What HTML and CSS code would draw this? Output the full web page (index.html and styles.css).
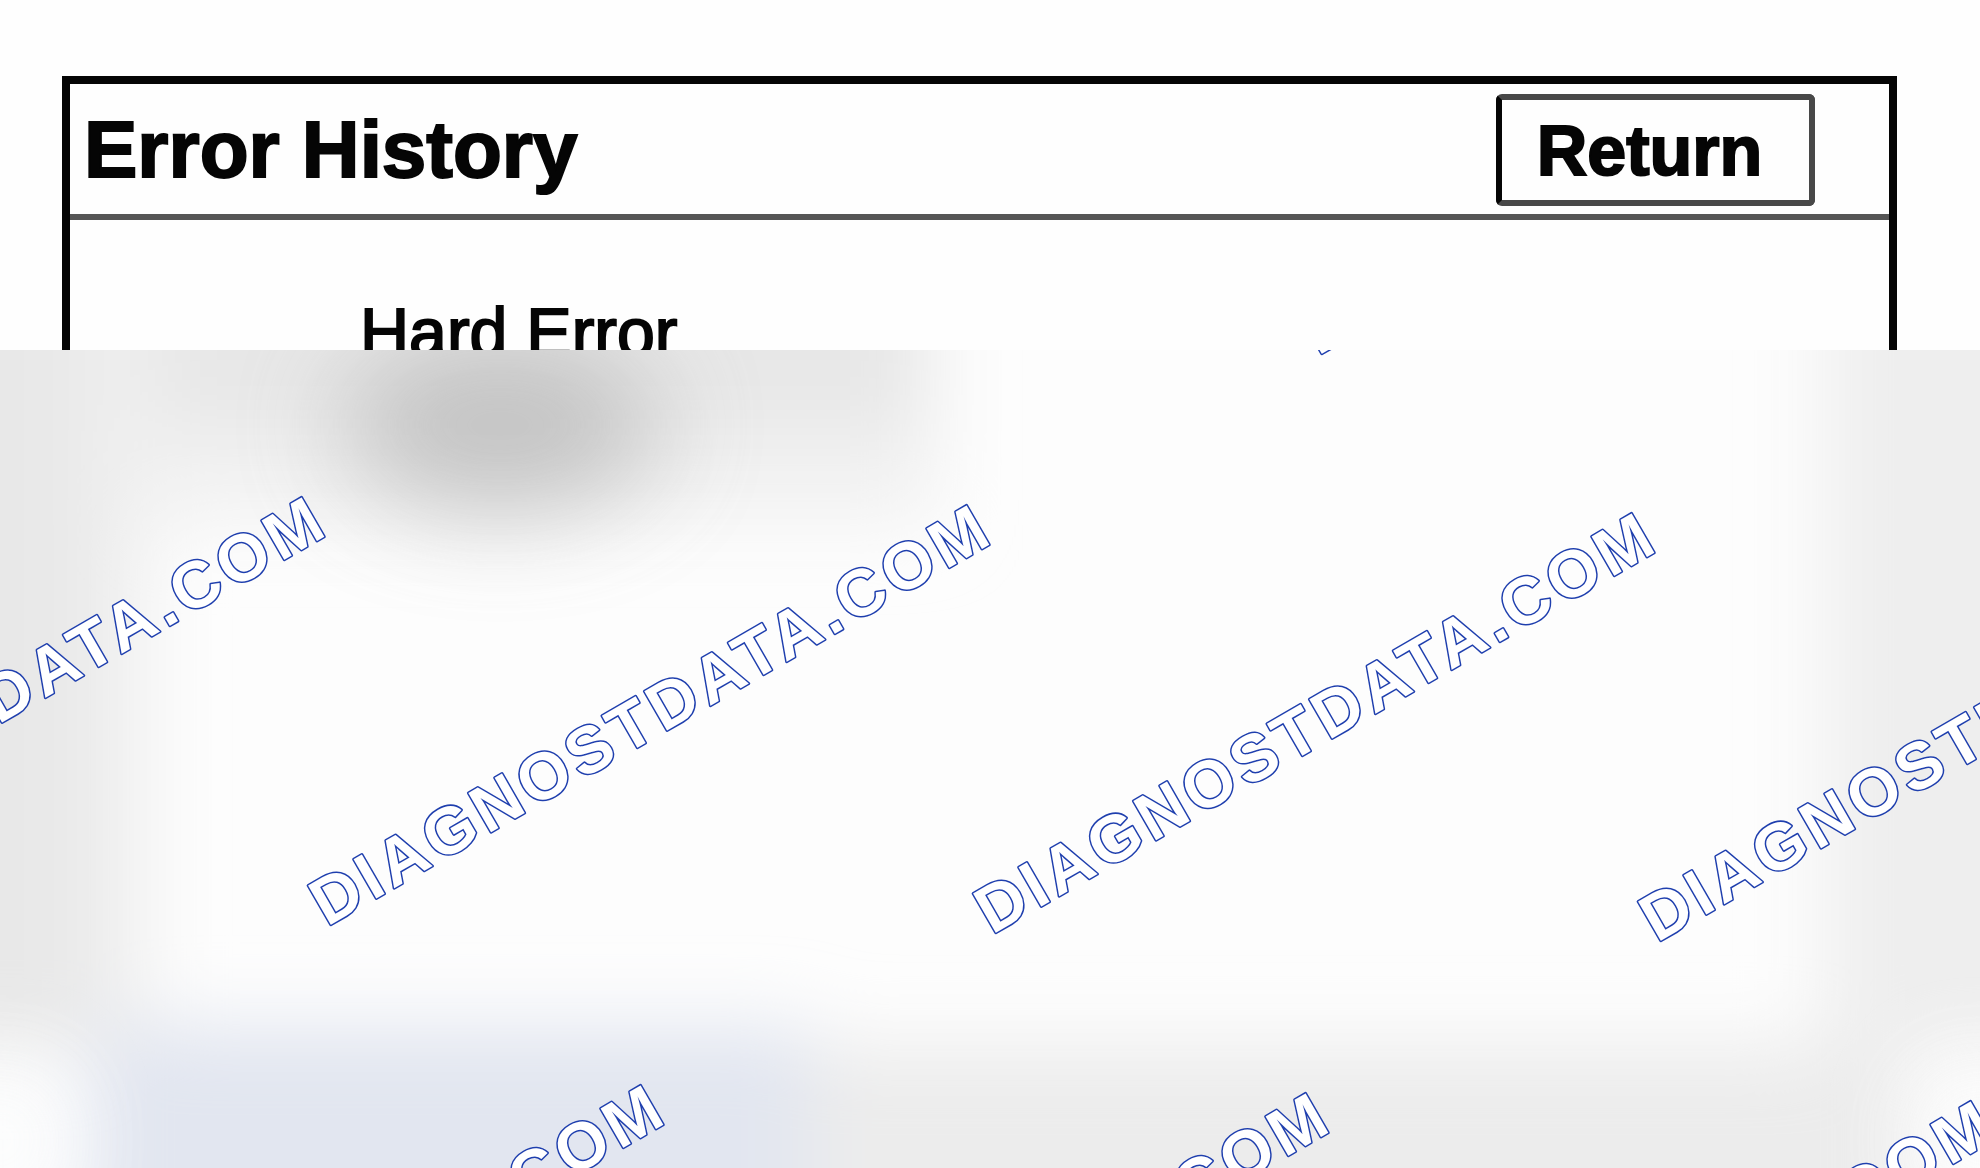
FILE: index.html
```html
<!DOCTYPE html>
<html lang="en">
<head>
    <meta charset="UTF-8">
    <meta name="viewport" content="width=device-width, initial-scale=1.0">
    <title>Error History</title>
    <link rel="stylesheet" href="styles.css">
</head>
<body>
    <main class="screen">
        <header class="screen-header">
            <h1>Error History</h1>
            <button type="button" class="return-button">Return</button>
        </header>
        <section class="screen-body">
            <h2>Hard Error</h2>
        </section>
    </main>

    <div class="preview">
        <svg class="preview-art" viewBox="0 0 1980 818" preserveAspectRatio="xMinYMin slice" role="img" aria-label="Preview">
            <defs>
                <filter id="soft" x="-50%" y="-50%" width="200%" height="200%">
                    <feGaussianBlur stdDeviation="38"/>
                </filter>
                <filter id="softer" x="-100%" y="-150%" width="300%" height="400%">
                    <feGaussianBlur stdDeviation="52"/>
                </filter>
            </defs>

            <!-- blurred backdrop -->
            <rect width="1980" height="818" fill="#fdfdfd"/>
            <g filter="url(#soft)">
                <rect x="-200" y="-200" width="1140" height="375" fill="#f2f2f2"/>
                <rect x="-200" y="-200" width="1120" height="280" fill="#e7e7e7"/>
                <rect x="-200" y="-200" width="350" height="900" fill="#f0f0f0"/>
                <rect x="-200" y="-200" width="290" height="900" fill="#e8e8e8"/>
                <rect x="1815" y="-200" width="365" height="900" fill="#f3f3f3"/>
                <rect x="1845" y="-200" width="335" height="900" fill="#eeeeee"/>
                <rect x="780" y="695" width="1130" height="400" fill="#ececec"/>
                <rect x="85" y="675" width="725" height="400" fill="#e2e6f0"/>
            </g>
            <ellipse cx="500" cy="75" rx="160" ry="85" fill="#bbb" opacity="0.85" filter="url(#softer)"/>
            <ellipse cx="0" cy="790" rx="50" ry="60" fill="#fafcfd" opacity="0.7" filter="url(#softer)"/>
            <ellipse cx="1980" cy="790" rx="50" ry="60" fill="#fafafa" opacity="0.6" filter="url(#softer)"/>

            <!-- watermark -->
            <g class="watermark">
                <text transform="translate(1318 6) rotate(-30)">DIAGNOSTDATA.COM</text>
                <text transform="translate(-338 569) rotate(-30)">DIAGNOSTDATA.COM</text>
                <text transform="translate(327 577) rotate(-30)">DIAGNOSTDATA.COM</text>
                <text transform="translate(992 585) rotate(-30)">DIAGNOSTDATA.COM</text>
                <text transform="translate(1657 593) rotate(-30)">DIAGNOSTDATA.COM</text>
                <text transform="translate(1 1157) rotate(-30)">DIAGNOSTDATA.COM</text>
                <text transform="translate(666 1165) rotate(-30)">DIAGNOSTDATA.COM</text>
                <text transform="translate(1331 1173) rotate(-30)">DIAGNOSTDATA.COM</text>
            </g>
        </svg>
    </div>
</body>
</html>
```

FILE: styles.css
```css
* {
    margin: 0;
    padding: 0;
    box-sizing: border-box;
}

body {
    display: flex;
    flex-direction: column;
    min-height: 100vh;
    font-family: "Liberation Sans", Arial, sans-serif;
    background: #fefefe;
    color: #050505;
}

.screen {
    margin: 76px 83px 0 62px;
    border: 8px solid #050505;
    border-bottom: none;
}

.screen-header {
    display: flex;
    align-items: center;
    justify-content: space-between;
    height: 136px;
    padding: 2px 74px 0 14px;
    border-bottom: 6px solid #555;
}

h1 {
    font-size: 80px;
    line-height: 96px;
    -webkit-text-stroke: 2px #050505;
}

.return-button {
    width: 319px;
    height: 112px;
    border: 6px solid #484848;
    border-left-color: #050505;
    border-radius: 6px;
    background: transparent;
    color: inherit;
    font-family: inherit;
    font-size: 70px;
    font-weight: bold;
    line-height: 96px;
    padding: 2px 12px 0 0;
    -webkit-text-stroke: 2px #050505;
    cursor: pointer;
}

/* only the upper part of the list is in view */
.screen-body {
    height: 130px;
    padding: 72px 0 0 290px;
    overflow: hidden;
}

h2 {
    font-size: 68px;
    font-weight: normal;
    line-height: 80px;
    -webkit-text-stroke: 2px #050505;
}

.preview {
    flex: 1;
    position: relative;
    overflow: hidden;
}

.preview-art {
    position: absolute;
    width: 100%;
    height: 100%;
}

.watermark {
    fill: #fff;
    stroke: #1f3fae;
    stroke-width: 3px;
    stroke-linejoin: round;
    paint-order: stroke;
    font-size: 66px;
    font-weight: bold;
    letter-spacing: 5px;
}
```
